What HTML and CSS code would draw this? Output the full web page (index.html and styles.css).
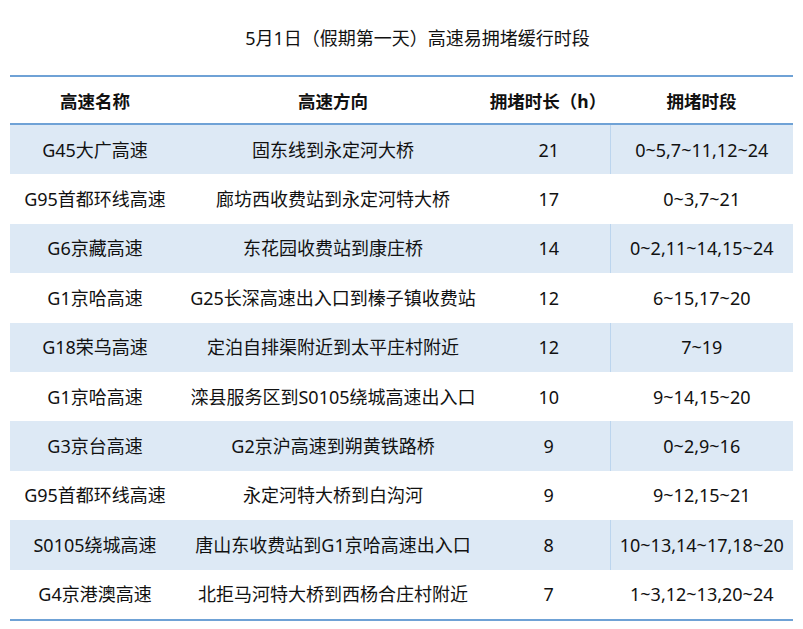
FILE: index.html
```html
<!DOCTYPE html>
<html lang="zh">
<head>
<meta charset="utf-8">
<link rel="stylesheet" href="styles.css">
</head>
<body>
<div class="title">5月1日（假期第一天）高速易拥堵缓行时段</div>
<table class="jam">
  <colgroup>
    <col class="c1"><col class="c2"><col class="c3"><col class="c4">
  </colgroup>
  <thead>
    <tr><th>高速名称</th><th>高速方向</th><th>拥堵时长（h）</th><th>拥堵时段</th></tr>
  </thead>
  <tbody>
    <tr class="alt"><td>G45大广高速</td><td>固东线到永定河大桥</td><td>21</td><td class="last">0~5,7~11,12~24</td></tr>
    <tr><td>G95首都环线高速</td><td>廊坊西收费站到永定河特大桥</td><td>17</td><td class="last">0~3,7~21</td></tr>
    <tr class="alt"><td>G6京藏高速</td><td>东花园收费站到康庄桥</td><td>14</td><td class="last">0~2,11~14,15~24</td></tr>
    <tr><td>G1京哈高速</td><td>G25长深高速出入口到榛子镇收费站</td><td>12</td><td class="last">6~15,17~20</td></tr>
    <tr class="alt"><td>G18荣乌高速</td><td>定泊自排渠附近到太平庄村附近</td><td>12</td><td class="last">7~19</td></tr>
    <tr><td>G1京哈高速</td><td>滦县服务区到S0105绕城高速出入口</td><td>10</td><td class="last">9~14,15~20</td></tr>
    <tr class="alt"><td>G3京台高速</td><td>G2京沪高速到朔黄铁路桥</td><td>9</td><td class="last">0~2,9~16</td></tr>
    <tr><td>G95首都环线高速</td><td>永定河特大桥到白沟河</td><td>9</td><td class="last">9~12,15~21</td></tr>
    <tr class="alt"><td>S0105绕城高速</td><td>唐山东收费站到G1京哈高速出入口</td><td>8</td><td class="last">10~13,14~17,18~20</td></tr>
    <tr><td>G4京港澳高速</td><td>北拒马河特大桥到西杨合庄村附近</td><td>7</td><td class="last">1~3,12~13,20~24</td></tr>
  </tbody>
</table>
</body>
</html>
```
FILE: styles.css
```css
html, body {
  margin: 0;
  padding: 0;
  background: #ffffff;
}
body {
  font-family: "Noto Sans", "Noto Sans CJK SC", sans-serif;
  color: #111111;
  font-size: 18px;
}
.title {
  height: 75px;
  line-height: 76px;
  text-align: center;
  font-size: 18px;
  padding-left: 32px;
}
.jam {
  margin-left: 10px;
  width: 783px;
  border-collapse: collapse;
  table-layout: fixed;
  border-top: 2px solid #6fa2d6;
  border-bottom: 2px solid #6fa2d6;
}
.c1 { width: 170px; }
.c2 { width: 306px; }
.c3 { width: 124px; }
.c4 { width: 183px; }
.jam th {
  height: 46px;
  padding: 0;
  font-weight: 700;
  font-size: 17.5px;
  text-align: center;
  border-bottom: 2px solid #6fa2d6;
}
.jam td {
  height: 49.4px;
  padding: 0;
  text-align: center;
  white-space: nowrap;
  line-height: 1;
}
.jam td:nth-child(3) {
  padding-left: 2px;
}
.jam tr.alt td {
  background: #dde9f5;
}
.jam td.last {
  border-left: 1px solid #ffffff;
}
.jam tr.alt td.last {
  border-left: 1px solid #bcd5ee;
}
```
